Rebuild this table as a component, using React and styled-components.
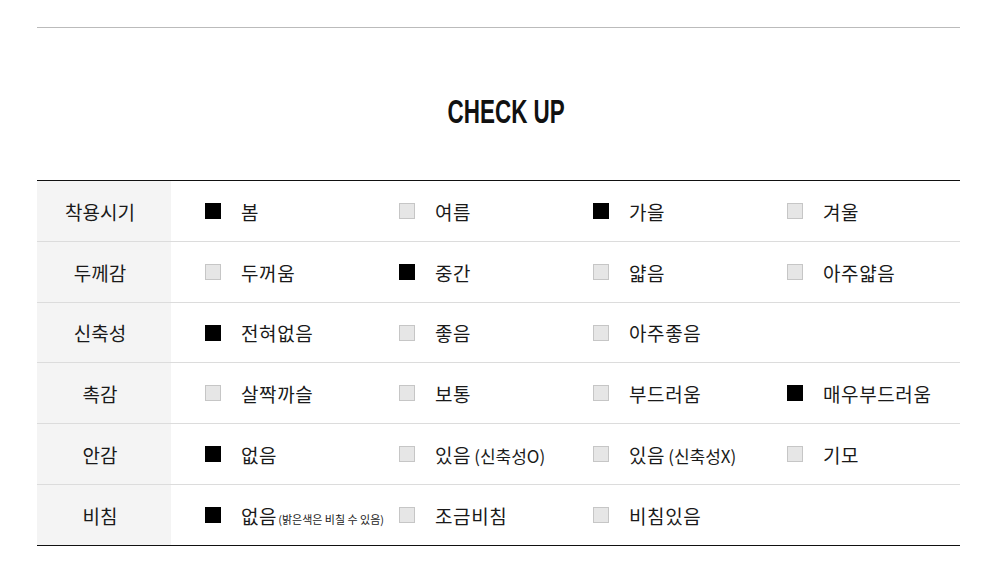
import React from "react";
import styled, { createGlobalStyle } from "styled-components";

const GlobalStyle = createGlobalStyle`
  body {
    margin: 0;
    background: #fff;
    font-family: "Noto Sans CJK KR", "Noto Sans", sans-serif;
    color: #1a1a1a;
  }
`;

const Page = styled.div`
  width: 923px;
  padding: 27px 0 0 37px;
`;

const TopLine = styled.div`
  border-top: 1px solid #bbb;
`;

const Title = styled.h2`
  margin: 64px 0 48px;
  padding-left: 16px;
  height: 40px;
  line-height: 40px;
  text-align: center;
  font-family: "Liberation Sans", Arial, sans-serif;
  font-weight: 700;
  font-size: 33px;
  color: #111;
`;

// condensed display face isn't installed, so squeeze the bold sans
const Squeeze = styled.span`
  display: inline-block;
  transform: scaleX(0.68);
`;

const Table = styled.div`
  border-top: 1px solid #111;
`;

const Row = styled.div`
  display: grid;
  grid-template-columns: 134px 1fr;
  height: ${(props) => props.h || 60}px;
  border-bottom: 1px solid ${(props) => (props.last ? "#111" : "#dcdcdc")};
`;

const Label = styled.div`
  display: flex;
  align-items: center;
  justify-content: center;
  padding-right: 8px;
  background: #f4f4f4;
  font-size: 19px;
`;

const Options = styled.div`
  display: grid;
  grid-template-columns: repeat(4, 194px);
  align-items: center;
  padding-left: 34px;
`;

const Option = styled.div`
  display: flex;
  align-items: center;
  white-space: nowrap;
`;

const Box = styled.span`
  box-sizing: border-box;
  width: 16px;
  height: 16px;
  margin-right: 20px;
  flex-shrink: 0;
  background: ${(props) => (props.checked ? "#000" : "#e6e6e6")};
  border: 1px solid ${(props) => (props.checked ? "#000" : "#c6c6c6")};
`;

const Text = styled.span`
  font-size: 19px;
  line-height: 1;
  letter-spacing: 0.6px;
`;

const Sub = styled.span`
  font-size: 17px;
  letter-spacing: 0;
  margin-left: 3px;
`;

const Note = styled.span`
  font-size: 11px;
  letter-spacing: 0;
  margin-left: 1px;
`;

const rows = [
  {
    label: "착용시기",
    options: [
      { text: "봄", on: true },
      { text: "여름" },
      { text: "가을", on: true },
      { text: "겨울" },
    ],
  },
  {
    label: "두께감",
    options: [
      { text: "두꺼움" },
      { text: "중간", on: true },
      { text: "얇음" },
      { text: "아주얇음" },
    ],
  },
  {
    label: "신축성",
    h: 59,
    options: [
      { text: "전혀없음", on: true },
      { text: "좋음" },
      { text: "아주좋음" },
    ],
  },
  {
    label: "촉감",
    options: [
      { text: "살짝까슬" },
      { text: "보통" },
      { text: "부드러움" },
      { text: "매우부드러움", on: true },
    ],
  },
  {
    label: "안감",
    options: [
      { text: "없음", on: true },
      { text: "있음", sub: "(신축성O)" },
      { text: "있음", sub: "(신축성X)" },
      { text: "기모" },
    ],
  },
  {
    label: "비침",
    options: [
      { text: "없음", on: true, note: "(밝은색은 비칠 수 있음)" },
      { text: "조금비침" },
      { text: "비침있음" },
    ],
  },
];

export default function App() {
  return (
    <Page>
      <GlobalStyle />
      <TopLine />
      <Title>
        <Squeeze>CHECK UP</Squeeze>
      </Title>
      <Table>
        {rows.map((row, i) => (
          <Row key={row.label} h={row.h} last={i === rows.length - 1}>
            <Label>{row.label}</Label>
            <Options>
              {row.options.map((opt, j) => (
                <Option key={j}>
                  <Box checked={opt.on} />
                  <Text>
                    {opt.text}
                    {opt.sub && <Sub>{opt.sub}</Sub>}
                    {opt.note && <Note>{opt.note}</Note>}
                  </Text>
                </Option>
              ))}
            </Options>
          </Row>
        ))}
      </Table>
    </Page>
  );
}
